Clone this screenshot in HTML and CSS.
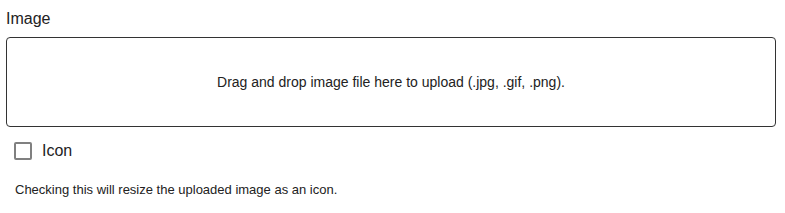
FILE: index.html
```html
<!DOCTYPE html>
<html>
<head>
<meta charset="utf-8">
<link rel="stylesheet" href="styles.css">
</head>
<body>
<div class="field">
  <label class="label">Image</label>
  <div class="dropzone">Drag and drop image file here to upload (.jpg, .gif, .png).</div>
  <label class="check">
    <span class="box"></span>
    <span class="check-text">Icon</span>
  </label>
  <p class="help">Checking this will resize the uploaded image as an icon.</p>
</div>
</body>
</html>
```
FILE: styles.css
```css
html, body {
  margin: 0;
  padding: 0;
  background: #fff;
}
body {
  font-family: "Liberation Sans", Arial, Helvetica, sans-serif;
  color: #222;
}
.field {
  padding: 9px 9px 0 6px;
  display: flex;
  flex-direction: column;
}
.label {
  font-size: 16px;
  line-height: 19px;
  margin-bottom: 9px;
  color: #222;
}
.dropzone {
  height: 88px;
  border: 1px solid #333;
  border-radius: 4px;
  display: flex;
  align-items: center;
  justify-content: center;
  font-size: 14px;
  color: #222;
}
.check {
  display: flex;
  align-items: center;
  margin-top: 15px;
  margin-left: 8px;
  gap: 10px;
}
.box {
  width: 14px;
  height: 14px;
  border: 2px solid #808080;
  border-radius: 2px;
  box-sizing: content-box;
}
.check-text {
  font-size: 16px;
  line-height: 18px;
}
.help {
  margin: 22px 0 0 9px;
  font-size: 13px;
  line-height: 15px;
  color: #222;
}
```
